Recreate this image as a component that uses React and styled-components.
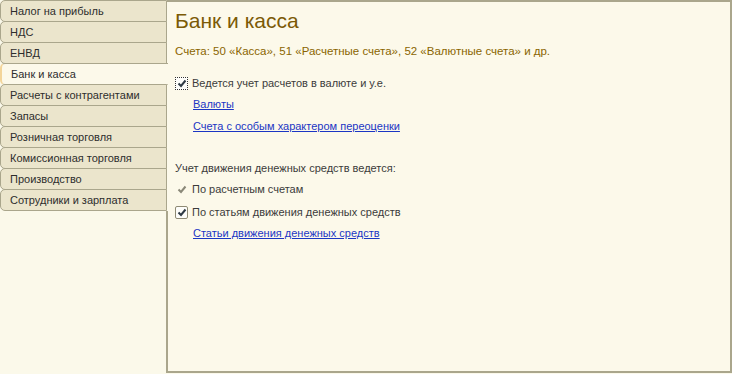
import React from 'react'
import styled, { createGlobalStyle } from 'styled-components'

const GlobalStyle = createGlobalStyle`
    html, body {
        margin: 0;
        padding: 0;
        background: #fbf9ea;
    }
    body {
        font-family: "Liberation Sans", Arial, sans-serif;
        font-size: 11px;
        color: #3b3b3b;
    }
`

const tabs = [
    'Налог на прибыль',
    'НДС',
    'ЕНВД',
    'Банк и касса',
    'Расчеты с контрагентами',
    'Запасы',
    'Розничная торговля',
    'Комиссионная торговля',
    'Производство',
    'Сотрудники и зарплата',
]

function CheckMark({ color }) {
    return (
        <svg width="10" height="9" viewBox="0 0 10 9">
            <path d="M1.5 4.5 L4 7 L8.5 1.5" fill="none" stroke={color} strokeWidth="2" />
        </svg>
    )
}

function App() {
    return (
        <>
            <GlobalStyle />
            <Layout>
                <Sidebar>
                    {tabs.map(t => (
                        <Tab key={t} active={t === 'Банк и касса'}>{t}</Tab>
                    ))}
                    <Filler />
                </Sidebar>
                <Panel>
                    <Title>Банк и касса</Title>
                    <Subtitle>Счета: 50 «Касса», 51 «Расчетные счета», 52 «Валютные счета» и др.</Subtitle>

                    <Row top={19}>
                        <Box dotted><CheckMark color="#2e3a44" /></Box>
                        Ведется учет расчетов в валюте и у.е.
                    </Row>
                    <LinkRow top={8}><Link>Валюты</Link></LinkRow>
                    <LinkRow top={8}><Link>Счета с особым характером переоценки</Link></LinkRow>

                    <Row top={27}>Учет движения денежных средств ведется:</Row>
                    <Row top={7}>
                        <Glyph><CheckMark color="#8a8878" /></Glyph>
                        По расчетным счетам
                    </Row>
                    <Row top={9}>
                        <Box><CheckMark color="#2e3a44" /></Box>
                        По статьям движения денежных средств
                    </Row>
                    <LinkRow top={8}><Link>Статьи движения денежных средств</Link></LinkRow>
                </Panel>
            </Layout>
        </>
    )
}

export default App

const Layout = styled.div`
    display: flex;
    width: 732px;
    height: 373px;
`

const Sidebar = styled.div`
    width: 167px;
    display: flex;
    flex-direction: column;
    position: relative;
    z-index: 2;
`

const Tab = styled.div`
    height: 20px;
    line-height: 20px;
    padding-left: 9px;
    margin-right: ${p => p.active ? '-1px' : '0'};
    background: ${p => p.active ? '#fcf9ea' : '#ebe5cc'};
    border: 1px solid #aaa68c;
    border-right: ${p => p.active ? 'none' : '1px solid #aaa68c'};
    border-bottom: ${p => p.active ? '1px solid #c9c5ae' : '1px solid #aaa68c'};
    border-left: ${p => p.active ? '2px solid #f3d59a' : '1px solid #aaa68c'};
    border-radius: 5px 0 0 5px;
    margin-top: -1px;
    color: #2d2d2d;
    white-space: nowrap;
    &:first-child {
        margin-top: 0;
    }
`

const Filler = styled.div`
    flex: 1;
    border-right: 2px solid #aaa68c;
    margin-right: -1px;
`

const Panel = styled.div`
    flex: 1;
    border: 2px solid #aaa68c;
    border-left: none;
    background: #fcf9ea;
    padding: 6px 0 0 8px;
`

const Title = styled.div`
    font-size: 21px;
    color: #7b5a06;
    line-height: 26px;
`

const Subtitle = styled.div`
    margin-top: 11px;
    font-size: 11.5px;
    color: #8a6500;
`

const Row = styled.div`
    display: flex;
    align-items: center;
    gap: 4px;
    margin-top: ${p => p.top}px;
    height: 14px;
`

const Box = styled.span`
    width: 11px;
    height: 11px;
    display: inline-flex;
    align-items: center;
    justify-content: center;
    border: 1px ${p => p.dotted ? 'dotted #333' : 'solid #8e8a74'};
    border-radius: ${p => p.dotted ? '0' : '2px'};
    background: #fdfdfa;
`

const Glyph = styled.span`
    width: 13px;
    display: inline-flex;
    justify-content: center;
`

const LinkRow = styled.div`
    margin-top: ${p => p.top}px;
    padding-left: 18px;
    height: 14px;
`

const Link = styled.a`
    color: #1b36c4;
    text-decoration: underline;
    cursor: pointer;
`
